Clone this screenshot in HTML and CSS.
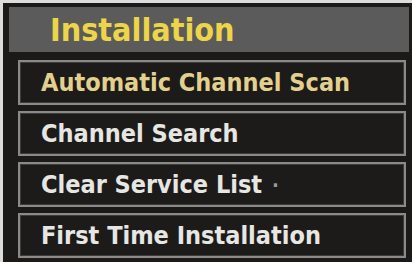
FILE: index.html
```html
<!DOCTYPE html>
<html>
<head>
<meta charset="utf-8">
<link rel="stylesheet" href="styles.css">
</head>
<body>
<div class="screen">
  <div class="header"><span class="title">Installation</span></div>
  <div class="menu">
    <div class="item active">Automatic Channel Scan</div>
    <div class="item">Channel Search</div>
    <div class="item">Clear Service List <span class="dot">·</span></div>
    <div class="item">First Time Installation</div>
  </div>
</div>
</body>
</html>
```
FILE: styles.css
```css
html, body {
  margin: 0;
  padding: 0;
  width: 412px;
  height: 262px;
  overflow: hidden;
  background: #dcdcdc;
}
.screen {
  margin: 3px 0 0 3px;
  height: 259px;
  background: #1b1a19;
  box-sizing: border-box;
  padding: 4px 3px 0 6px;
  font-family: "DejaVu Sans Condensed", "DejaVu Sans", sans-serif;
  font-stretch: condensed;
  font-weight: bold;
}
.header {
  height: 45px;
  background: #5c5b5c;
  display: flex;
  align-items: center;
  padding-left: 41px;
  box-sizing: border-box;
}
.title {
  color: #ecd548;
  font-size: 32px;
}
.menu {
  display: flex;
  flex-direction: column;
  gap: 6px;
  margin: 8px 3px 0 9px;
}
.item {
  height: 45px;
  box-sizing: border-box;
  border: 2px solid #8a8a88;
  box-shadow: inset 0 0 0 1px #3c3c3a;
  background: #1c1b1a;
  color: #e6e6e2;
  font-size: 25px;
  display: flex;
  align-items: center;
  padding-left: 21px;
  white-space: pre;
}
.item.active {
  color: #e2d08e;
}
.dot {
  color: #9a9a98;
  font-size: 20px;
  margin-left: 2px;
  vertical-align: 2px;
}
```
